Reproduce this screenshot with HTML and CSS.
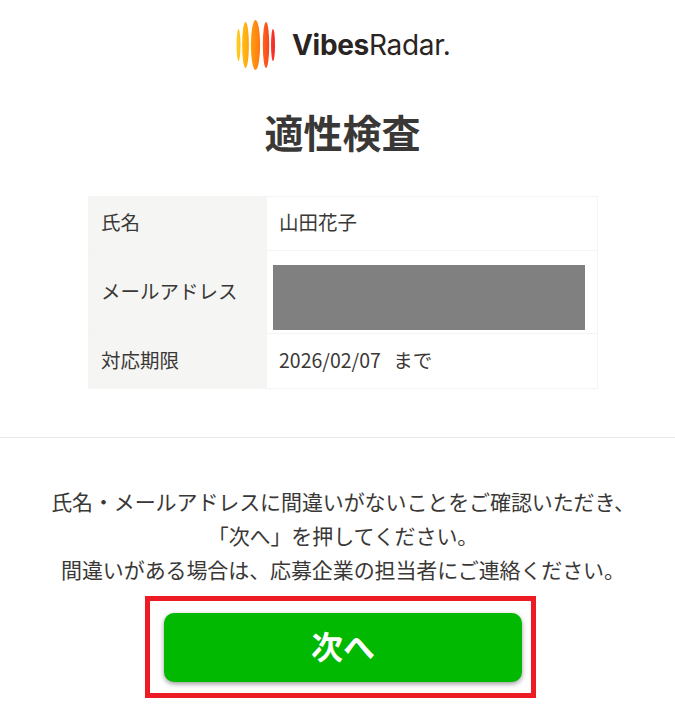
FILE: index.html
```html
<!DOCTYPE html>
<html lang="ja">

<head>
    <meta charset="utf-8" />
    <title>適性検査</title>
    <link rel="stylesheet" href="styles.css">
</head>

<body>
    <header class="logo">
        <svg class="logo-mark" width="40" height="50" viewBox="0 0 40 50" aria-hidden="true">
            <defs>
                <linearGradient id="bars" gradientUnits="userSpaceOnUse" x1="0" y1="0" x2="40" y2="0">
                    <stop offset="0" stop-color="#ffd024" />
                    <stop offset="0.3" stop-color="#ffa90c" />
                    <stop offset="0.55" stop-color="#ff8214" />
                    <stop offset="0.8" stop-color="#fb4a1e" />
                    <stop offset="1" stop-color="#f2202c" />
                </linearGradient>
            </defs>
            <ellipse cx="2.5" cy="25" rx="2" ry="16" fill="url(#bars)" />
            <ellipse cx="9.5" cy="25" rx="3.4" ry="23" fill="url(#bars)" />
            <ellipse cx="19.5" cy="25" rx="4.6" ry="25" fill="url(#bars)" />
            <ellipse cx="30" cy="25" rx="3.2" ry="23" fill="url(#bars)" />
            <ellipse cx="37" cy="25" rx="2" ry="16" fill="url(#bars)" />
        </svg>
        <span class="logo-text"><b>Vibes</b>Radar.</span>
    </header>

    <h1 class="title">適性検査</h1>

    <table class="info">
        <tr class="row-name">
            <th>氏名</th>
            <td>山田花子</td>
        </tr>
        <tr class="row-mail">
            <th>メールアドレス</th>
            <td class="mail-cell"><div class="masked"></div></td>
        </tr>
        <tr class="row-date">
            <th>対応期限</th>
            <td>2026/02/07 まで</td>
        </tr>
    </table>

    <hr class="divider">

    <p class="message">氏名・メールアドレスに間違いがないことをご確認いただき、<br>「次へ」を押してください。<br>間違いがある場合は、応募企業の担当者にご連絡ください。</p>

    <div class="highlight">
        <button type="button" class="next">次へ</button>
    </div>
</body>

</html>
```

FILE: styles.css
```css
* {
    box-sizing: border-box;
}

body {
    margin: 0;
    color: #3a3836;
    font-family: "Noto Sans CJK JP", "Noto Sans", sans-serif;
}

.logo {
    display: flex;
    align-items: center;
    gap: 16px;
    height: 50px;
    margin-top: 20px;
    padding-left: 236px;
}

.logo-text {
    color: #2a2422;
    font-family: "Inter", "Noto Sans", sans-serif;
    font-size: 28px;
    letter-spacing: -0.3px;
    line-height: 50px;
}

.logo-text b {
    font-weight: 700;
}

.title {
    margin: 34px 0 0;
    padding-left: 10px;
    height: 60px;
    font-size: 39px;
    line-height: 55px;
    font-weight: 700;
    text-align: center;
}

.info {
    width: 510px;
    margin: 32px 0 0 88px;
    border-collapse: collapse;
    table-layout: fixed;
    font-size: 19.5px;
    word-spacing: 8px;
}

.info th,
.info td {
    padding: 0 11px 4px 12px;
    border: 1px solid #f4f4f3;
    font-weight: 400;
    text-align: left;
}

.info th {
    width: 178px;
    background: #f5f5f3;
}

.info .mail-cell {
    padding: 0;
    vertical-align: top;
}

.row-name {
    height: 54px;
}

.row-mail {
    height: 83px;
}

.row-date {
    height: 55px;
}

.masked {
    width: 312px;
    height: 65px;
    margin: 14px 0 0 6px;
    background: #808080;
}

.divider {
    height: 1px;
    margin: 48px 0 0;
    border: 0;
    background: #e8e8e8;
}

.message {
    margin: 46px 0 0;
    padding-left: 11px;
    font-size: 21px;
    letter-spacing: -0.1px;
    line-height: 34px;
    text-align: center;
}

.highlight {
    width: 391px;
    height: 102px;
    margin: 10px 0 0 145px;
    padding: 12px 9px 0 14px;
    border: 5px solid #ed1c24;
}

.next {
    display: block;
    width: 358px;
    height: 69px;
    padding: 0 0 5px;
    border: 0;
    border-radius: 10px;
    background: #00b900;
    box-shadow: 0 2px 5px rgba(0, 0, 0, .4);
    color: #fff;
    font-family: inherit;
    font-size: 32px;
    font-weight: 700;
}
```
